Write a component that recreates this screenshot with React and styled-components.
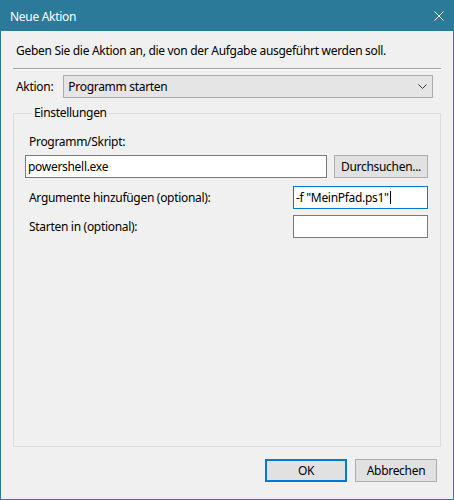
import styled, { createGlobalStyle } from "styled-components";

const GlobalStyle = createGlobalStyle`
  body {
    margin: 0;
    font-family: "Noto Sans", "Liberation Sans", sans-serif;
    font-size: 12px;
    letter-spacing: -0.3px;
    color: #000;
  }
`;

const Window = styled.div`
  width: 454px;
  height: 500px;
  box-sizing: border-box;
  border: 1px solid #2b7a99;
  background: #f0f0f0;
  display: flex;
  flex-direction: column;
`;

const TitleBar = styled.div`
  height: 30px;
  background: #2b7a99;
  color: #fff;
  display: flex;
  align-items: center;
  justify-content: space-between;
  padding: 0 9px 0 9px;
  font-size: 12px;
`;

const CloseIcon = styled.svg`
  width: 10px;
  height: 10px;
`;

const Body = styled.div`
  flex: 1;
  display: flex;
  flex-direction: column;
  padding: 12px 12px 17px 12px;
`;

const Intro = styled.div`
  line-height: 16px;
  padding-left: 3px;
`;

const Separator = styled.div`
  height: 1px;
  margin: 9px 0 5px;
  background: #a0a0a0;
  border-bottom: 1px solid #fff;
`;

const Row = styled.div`
  display: flex;
  align-items: center;
  justify-content: ${(p) => p.$justify || "flex-start"};
  gap: ${(p) => p.$gap || 0}px;
  margin-top: ${(p) => p.$top || 0}px;
`;

const Label = styled.span`
  display: block;
  line-height: 16px;
  padding-left: ${(p) => p.$indent || 0}px;
`;

const Combo = styled.div`
  flex: 1;
  height: 23px;
  box-sizing: border-box;
  margin: 0 8px 0 0;
  background: #e5e5e5;
  border: 1px solid #acacac;
  display: flex;
  align-items: center;
  justify-content: space-between;
  padding: 0 5px 0 4px;
`;

const Group = styled.fieldset`
  flex: 1;
  margin: 7px 0 0;
  padding: 13px 12px 0 11px;
  border: 1px solid #dcdcdc;
  min-width: 0;
`;

const Legend = styled.legend`
  padding: 0 2px;
  margin-left: 7px;
  line-height: 16px;
`;

const Input = styled.div`
  box-sizing: border-box;
  width: ${(p) => p.$width}px;
  height: 23px;
  background: #fff;
  border: 1px solid ${(p) => (p.$focused ? "#0078d7" : "#7a7a7a")};
  display: flex;
  align-items: center;
  padding: 0 2px;
  white-space: pre;
`;

const Caret = styled.span`
  display: inline-block;
  width: 1px;
  height: 13px;
  background: #000;
  margin-left: 1px;
`;

const Button = styled.div`
  box-sizing: border-box;
  width: ${(p) => p.$width}px;
  height: 23px;
  background: #e1e1e1;
  border: ${(p) => (p.$default ? "2px solid #0078d7" : "1px solid #adadad")};
  display: flex;
  align-items: center;
  justify-content: center;
`;

const Footer = styled.div`
  display: flex;
  justify-content: flex-end;
  gap: 8px;
  margin-top: 12px;
  padding-right: 4px;
`;

export default function App() {
  return (
    <>
      <GlobalStyle />
      <Window>
        <TitleBar>
          <span>Neue Aktion</span>
          <CloseIcon viewBox="0 0 10 10">
            <path d="M0.5 0.5 L9.5 9.5 M9.5 0.5 L0.5 9.5" stroke="#fff" strokeWidth="1" />
          </CloseIcon>
        </TitleBar>
        <Body>
          <Intro>Geben Sie die Aktion an, die von der Aufgabe ausgeführt werden soll.</Intro>
          <Separator />
          <Row $gap={10}>
            <Label $indent={3}>Aktion:</Label>
            <Combo>
              <span>Programm starten</span>
              <svg width="9" height="6" viewBox="0 0 9 6">
                <path d="M0.5 0.5 L4.5 4.5 L8.5 0.5" fill="none" stroke="#333" strokeWidth="1" />
              </svg>
            </Combo>
          </Row>
          <Group>
            <Legend>Einstellungen</Legend>
            <Label $indent={4}>Programm/Skript:</Label>
            <Row $justify="space-between" $top={5}>
              <Input $width={302}>powershell.exe</Input>
              <Button $width={94}>Durchsuchen...</Button>
            </Row>
            <Row $justify="space-between" $top={8}>
              <Label $indent={4}>Argumente hinzufügen (optional):</Label>
              <Input $width={135} $focused>
                -f "MeinPfad.ps1"
                <Caret />
              </Input>
            </Row>
            <Row $justify="space-between" $top={6}>
              <Label $indent={4}>Starten in (optional):</Label>
              <Input $width={135} />
            </Row>
          </Group>
          <Footer>
            <Button $width={82} $default>OK</Button>
            <Button $width={82}>Abbrechen</Button>
          </Footer>
        </Body>
      </Window>
    </>
  );
}
